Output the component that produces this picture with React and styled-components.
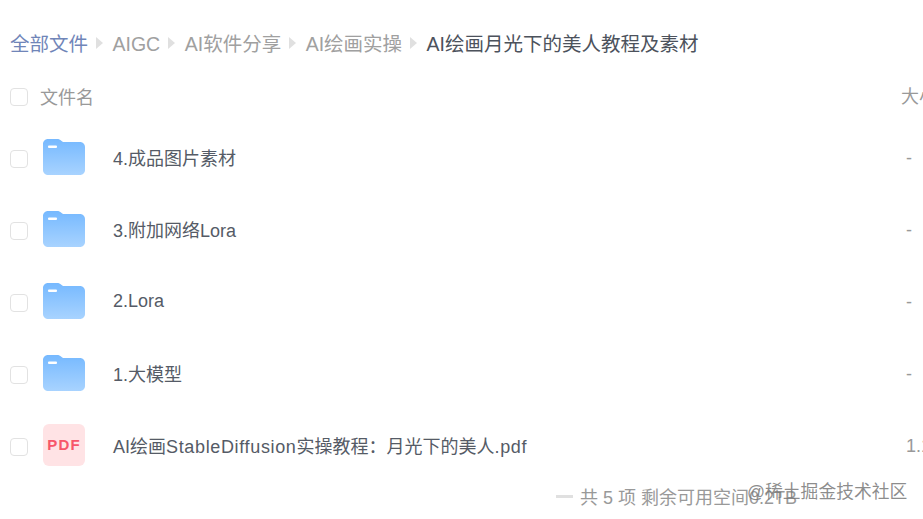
import React from "react";
import styled, { createGlobalStyle } from "styled-components";

const Global = createGlobalStyle`
  html, body { margin: 0; padding: 0; background: #fff; overflow: hidden; height: 519px; }
  body { font-family: "Liberation Sans", "Noto Sans CJK SC", sans-serif; }
`;

const Page = styled.div`
  position: relative;
  width: 923px;
  height: 519px;
  overflow: hidden;
  padding: 28px 0 0 10px;
  box-sizing: border-box;
`;

const Breadcrumb = styled.nav`
  display: flex;
  align-items: center;
  height: 32px;
  font-size: 19.5px;
  line-height: 32px;
  white-space: nowrap;
`;

const Crumb = styled.span`
  color: ${(p) => p.$color};
`;

const Sep = styled.i`
  width: 0;
  height: 0;
  margin: 0 9.500px 2px 8px;
  border-left: 7px solid #e0e0e0;
  border-top: 6px solid transparent;
  border-bottom: 6px solid transparent;
`;

const Row = styled.div`
  display: flex;
  align-items: center;
  width: 1100px;
  height: ${(p) => (p.$head ? "38px" : "72px")};
`;

const HeadRow = styled(Row)`
  margin-top: 18px;
  margin-bottom: 7px;
  color: #999;
  font-size: 18px;
`;

const Check = styled.span`
  flex: none;
  width: 16px;
  height: 16px;
  border: 1px solid #e2e2e2;
  border-radius: 4px;
  background: #fff;
`;

const HeadName = styled.span`
  flex: none;
  width: 861px;
  margin-left: 12px;
  margin-bottom: 2px;
`;

const HeadSize = styled.span`
  margin-bottom: 4px;
`;

const IconBox = styled.span`
  flex: none;
  display: flex;
  align-items: center;
  justify-content: center;
  width: 42px;
  height: 42px;
  margin-left: 15px;
  margin-bottom: 5px;
`;

const PdfBadge = styled(IconBox)`
  background: #ffe3e5;
  border-radius: 6px;
  color: #f7566a;
  font-weight: 700;
  font-size: 15px;
  letter-spacing: 1.2px;
`;

const Name = styled.span`
  flex: none;
  width: 793px;
  margin-left: 28px;
  margin-bottom: 4px;
  color: #555b66;
  font-size: 18px;
  white-space: nowrap;
`;

const Latin = styled.span`
  letter-spacing: 0.65px;
`;

const Size = styled.span`
  color: #999;
  font-size: 18px;
  margin-bottom: 2px;
  white-space: nowrap;
`;

const Footer = styled.div`
  display: flex;
  align-items: center;
  justify-content: flex-end;
  height: 28px;
  margin-top: -1px;
  padding-right: 126px;
  color: #999;
  font-size: 18px;
  white-space: nowrap;
`;

const Dash = styled.i`
  width: 17px;
  height: 3px;
  margin-right: 7px;
  background: #e0e0e0;
`;

const Watermark = styled.span`
  position: absolute;
  left: 747px;
  top: 478px;
  color: rgba(120, 120, 120, 0.85);
  font-size: 17.8px;
  line-height: 28px;
  white-space: nowrap;
`;

const Folder = () => (
  <svg width="42" height="36" viewBox="0 0 42 36">
    <defs>
      <linearGradient id="fg" x1="0" y1="0" x2="0" y2="1">
        <stop offset="0" stopColor="#76b9ff" />
        <stop offset="1" stopColor="#a8d3ff" />
      </linearGradient>
    </defs>
    <path
      d="M5 0h9c2 0 3 .6 4.300 1.700L20 3h17c2.800 0 5 2.200 5 5v23c0 2.800-2.200 5-5 5H5c-2.800 0-5-2.200-5-5V5c0-2.800 2.200-5 5-5z"
      fill="url(#fg)"
    />
    <rect x="5" y="6.500" width="9" height="2.500" rx="1" fill="#fff" />
  </svg>
);

const crumbs = ["AIGC", "AI软件分享", "AI绘画实操"];
const folders = ["4.成品图片素材", "3.附加网络Lora", "2.Lora", "1.大模型"];

export default function App() {
  return (
    <Page>
      <Global />
      <Breadcrumb>
        <Crumb $color="#7085b8">全部文件</Crumb>
        {crumbs.map((c) => (
          <React.Fragment key={c}>
            <Sep />
            <Crumb $color="#a0a0a0">{c}</Crumb>
          </React.Fragment>
        ))}
        <Sep />
        <Crumb $color="#4c525c">AI绘画月光下的美人教程及素材</Crumb>
      </Breadcrumb>
      <HeadRow $head>
        <Check />
        <HeadName>文件名</HeadName>
        <HeadSize>大小</HeadSize>
      </HeadRow>
      {folders.map((f) => (
        <Row key={f}>
          <Check />
          <IconBox><Folder /></IconBox>
          <Name>{f}</Name>
          <Size>-</Size>
        </Row>
      ))}
      <Row>
        <Check />
        <PdfBadge>PDF</PdfBadge>
        <Name>
          AI绘画<Latin>StableDiffusion</Latin>实操教程：月光下的美人<Latin>.pdf</Latin>
        </Name>
        <Size>1.1MB</Size>
      </Row>
      <Footer>
        <Dash />
        共 5 项 剩余可用空间0.2TB
      </Footer>
      <Watermark>@稀土掘金技术社区</Watermark>
    </Page>
  );
}
